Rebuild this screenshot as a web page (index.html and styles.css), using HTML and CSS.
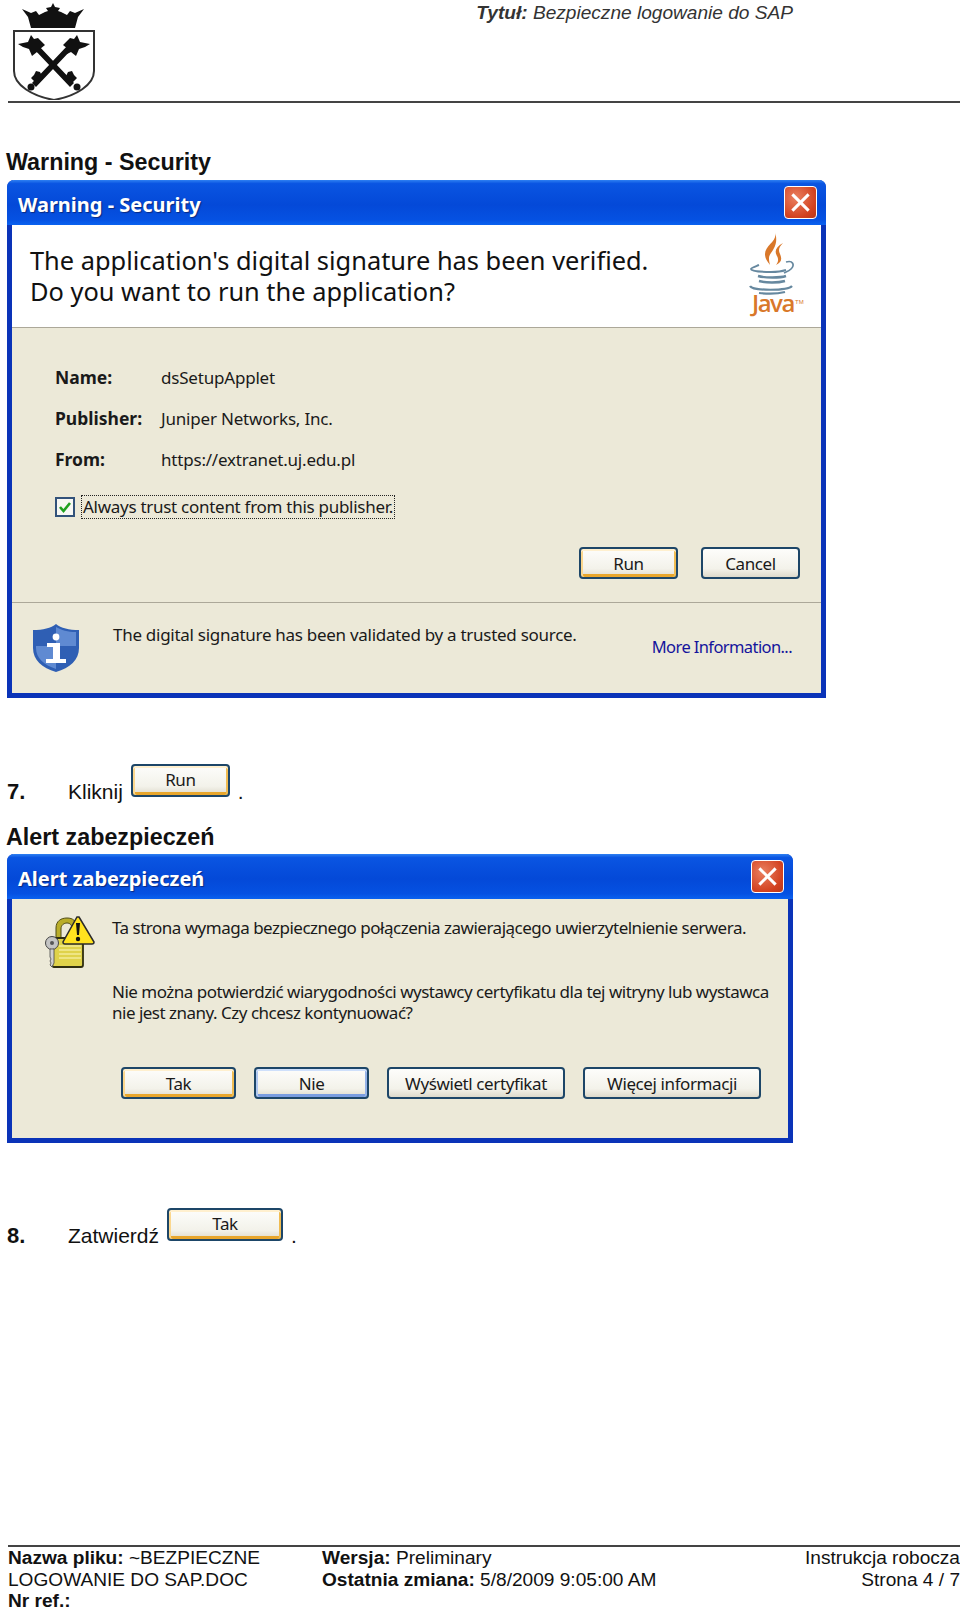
FILE: index.html
```html
<!DOCTYPE html>
<html lang="pl">
  <head>
    <meta charset="UTF-8" />
    <title>Bezpieczne logowanie do SAP</title>
    <link rel="stylesheet" href="styles.css">
  </head>
  <body>
    <!-- HEADER -->
    <header class="page-header">
      <svg class="crest" viewBox="12 0 86 100" width="86" height="100">
        <path d="M22 9l9 4 5-2 3 4 6-3 3-1-2-3 5-1 2-4 2 4 5 1-2 3 3 1 6 3 3-4 5 2 9-4-6 8-3 11H31l-3-11z" fill="#111"/>
        <path d="M14 31h80v40c0 14-18 25-40 29-22-4-40-15-40-29z" fill="#fff" stroke="#333" stroke-width="2"/>
        <path d="M36 47L72 85M70 47L34 85" stroke="#111" stroke-width="5.5" fill="none"/>
        <path d="M18 44l10-2 3-7 3 4 4-1 7 7-5 4 1 5-4-2-5 4-3-7-6-2z" fill="#111"/>
        <path d="M90 44l-10-2-3-7-3 4-4-1-7 7 5 4-1 5 4-2 5 4 3-7 6-2z" fill="#111"/>
        <path d="M40 72l-4-1-2 4-3 3 5 5 3-3 4-2zM68 72l4-1 2 4 3 3-5 5-3-3-4-2z" fill="#111"/>
        <circle cx="31" cy="87" r="3.5" fill="#111"/>
        <circle cx="77" cy="87" r="3.5" fill="#111"/>
      </svg>
      <p class="doc-title"><b>Tytuł:</b> Bezpieczne logowanie do SAP</p>
    </header>

    <main class="content">
      <h2 class="section-title first">Warning - Security</h2>

      <!-- JAVA DIALOG -->
      <div class="dialog java-dialog">
        <div class="titlebar">
          <span>Warning - Security</span>
          <span class="close-btn"></span>
        </div>
        <div class="banner">
          <p>The application's digital signature has been verified.<br />Do you want to run the application?</p>
          <svg class="java-logo" viewBox="0 0 58 92" width="58" height="92">
            <path d="M26 0c3 9-10 13-10 22 0 5 3 8 5 11-1-5-2-8 1-12 4-6 7-11 4-21z" fill="#d9782a"/>
            <path d="M34 11c-7 4-9 8-6 13 2 4 1 6-1 9 6-3 6-6 4-11-2-4-1-7 3-11z" fill="#d9782a"/>
            <path d="M10 33c-5 2-8 3-8 4 0 2 9 3 20 3 7 0 12-1 15-2" fill="none" stroke="#66889f" stroke-width="2"/>
            <path d="M37 30c7-2 9 3 5 7-2 2-5 3-7 4" fill="none" stroke="#66889f" stroke-width="1.7"/>
            <path d="M9 44c7 2 22 2 28 0M10 49c7 2 19 2 26 0" fill="none" stroke="#66889f" stroke-width="2.4"/>
            <path d="M1 54c2 5 38 5 42 0M10 61c9 1 18 1 26-1" fill="none" stroke="#66889f" stroke-width="2.2"/>
            <text class="java-word" x="3" y="80">Java</text>
            <text class="java-tm" x="46" y="72">TM</text>
          </svg>
        </div>
        <div class="java-body">
          <dl class="details">
            <dt>Name:</dt><dd>dsSetupApplet</dd>
            <dt>Publisher:</dt><dd>Juniper Networks, Inc.</dd>
            <dt>From:</dt><dd>https://extranet.uj.edu.pl</dd>
          </dl>
          <div class="trust-row">
            <span class="checkbox">
              <svg viewBox="0 0 14 14" width="14" height="14"><path d="M2 7l3.5 4L12 3" fill="none" stroke="#21a121" stroke-width="2.6"/></svg>
            </span>
            <span class="trust-label">Always trust content from this publisher.</span>
          </div>
          <div class="java-actions">
            <span class="xp-btn default">Run</span>
            <span class="xp-btn">Cancel</span>
          </div>
        </div>
        <div class="java-foot">
          <svg class="shield" viewBox="0 0 48 50" width="48" height="50">
            <path d="M24 1c5 4 13 6 23 6v18c0 12-9 20-23 24C10 45 1 37 1 25V7c10 0 18-2 23-6z" fill="#2f5fb4"/>
            <path d="M24 4c5 3 12 5 20 5v14H24zM24 23v23C12 42 4 35 4 25v-2z" fill="#5f8ad2"/>
            <circle cx="24" cy="14" r="3.4" fill="#fff"/>
            <path d="M15 20h13v16h6v4H14v-4h7V24h-6z" fill="#fff"/>
          </svg>
          <p class="foot-text">The digital signature has been validated by a trusted source.</p>
          <a class="more-link">More Information...</a>
        </div>
      </div>

      <p class="step step-seven">
        <b class="step-no">7.</b>
        <span>Kliknij</span>
        <span class="xp-btn default inline run-inline">Run</span>
        <span>.</span>
      </p>

      <h2 class="section-title second">Alert zabezpieczeń</h2>

      <!-- IE DIALOG -->
      <div class="dialog alert-dialog">
        <div class="titlebar">
          <span>Alert zabezpieczeń</span>
          <span class="close-btn"></span>
        </div>
        <div class="alert-body">
          <div class="alert-main">
            <svg class="lock" viewBox="0 0 50 52" width="50" height="52">
              <path d="M11 24V12c0-7 5-10 11-10s9 3 10 8l-5 3c0-4-2-6-5-6s-6 2-6 6v11z" fill="#b9ad2a" stroke="#4f4c16"/>
              <rect x="7" y="22" width="31" height="29" rx="2" fill="#dfd24a" stroke="#2f2e10" stroke-width="1.8"/>
              <path d="M14 30h22M14 34h22M14 38h22M14 42h22" stroke="#f3eb96" stroke-width="1.5"/>
              <path d="M34 1L49 26c0 1-1 2-2 2H20c-1 0-2-1-2-2L32 1z" fill="#ffe21f" stroke="#2b2b2b" stroke-width="1.5"/>
              <path d="M31 7h4l-1 12h-2z" fill="#111"/>
              <circle cx="33" cy="23" r="2.2" fill="#111"/>
              <circle cx="7" cy="27" r="6.5" fill="#c4c4c4" stroke="#444"/>
              <circle cx="7" cy="27" r="2" fill="#555"/>
              <path d="M5 33h4v14l-2 4-2-2 1-2-1-2 1-2-1-2z" fill="#d0d0d0" stroke="#444" stroke-width=".8"/>
            </svg>
            <div class="alert-text">
              <p>Ta strona wymaga bezpiecznego połączenia zawierającego uwierzytelnienie serwera.</p>
              <p>Nie można potwierdzić wiarygodności wystawcy certyfikatu dla tej witryny lub wystawca<br />nie jest znany. Czy chcesz kontynuować?</p>
            </div>
          </div>
          <div class="alert-actions">
            <span class="xp-btn default wide-s">Tak</span>
            <span class="xp-btn focus wide-s">Nie</span>
            <span class="xp-btn wide-l">Wyświetl certyfikat</span>
            <span class="xp-btn wide-l">Więcej informacji</span>
          </div>
        </div>
      </div>

      <p class="step step-eight">
        <b class="step-no">8.</b>
        <span>Zatwierdź</span>
        <span class="xp-btn default inline tak-inline">Tak</span>
        <span>.</span>
      </p>
    </main>

    <!-- FOOTER -->
    <footer class="page-footer">
      <div class="foot-file"><b>Nazwa pliku:</b> ~BEZPIECZNE<br />LOGOWANIE DO SAP.DOC<br /><b>Nr ref.:</b></div>
      <div class="foot-version"><b>Wersja:</b> Preliminary<br /><b>Ostatnia zmiana:</b> 5/8/2009 9:05:00 AM</div>
      <div class="foot-page">Instrukcja robocza<br />Strona 4 / 7</div>
    </footer>
  </body>
</html>
```

FILE: styles.css
```css
/* GLOBAL */
html,
body {
  margin: 0;
  padding: 0;
  height: 1610px;
  overflow: hidden;
}
*,
*::before,
*::after {
  box-sizing: border-box;
}
body {
  display: flex;
  flex-direction: column;
  font-family: "Liberation Sans", Arial, sans-serif;
  background: #fff;
  color: #111;
}
p,
h2,
dl,
dd {
  margin: 0;
}

/* HEADER */
.page-header {
  display: flex;
  justify-content: space-between;
  height: 103px;
  margin-left: 8px;
  padding-left: 4px;
  border-bottom: 2px solid #444;
}
.doc-title {
  font-size: 19.1px;
  font-style: italic;
  line-height: 25px;
  color: #333;
  padding-right: 167px;
}

/* HEADINGS & STEPS */
.content {
  flex: 1;
  padding-left: 7px;
}
.section-title {
  font-size: 23.3px;
  line-height: 27px;
  font-weight: bold;
  margin-left: -1px;
}
.section-title.first {
  margin-top: 46px;
  margin-bottom: 4px;
}
.section-title.second {
  margin-bottom: 3px;
}
.step {
  display: flex;
  align-items: flex-end;
  font-size: 21px;
  line-height: 24px;
}
.step-no {
  width: 61px;
  font-size: 22px;
}
.step > span:nth-child(2) {
  margin-right: 8px;
}
.step > span:last-child {
  margin-left: 8px;
}
.step-seven {
  margin-top: 66px;
  margin-bottom: 20px;
}
.step-eight {
  margin-top: 65px;
}

/* XP DIALOG */
.dialog {
  display: flex;
  flex-direction: column;
  border: 5px solid #0a33b8;
  border-top: 0;
  border-radius: 7px 7px 0 0;
  background: #ece9d8;
  font-family: "Noto Sans", "Open Sans", sans-serif;
  color: #1a1a1a;
}
.java-dialog {
  width: 819px;
  height: 518px;
}
.alert-dialog {
  width: 786px;
  height: 289px;
}
.titlebar {
  display: flex;
  align-items: center;
  justify-content: space-between;
  flex: none;
  height: 45px;
  margin: 0 -5px;
  padding: 0 9px 0 11px;
  border-radius: 7px 7px 0 0;
  background: linear-gradient(#2e80f2 0, #0a55e2 8%, #0449d8 55%, #0551e2 88%, #0a62f0 100%);
  color: #fff;
  font-size: 20px;
  font-weight: 700;
  text-shadow: 1px 1px 1px #0a2a80;
}
.titlebar > span:first-child {
  padding-top: 4px;
}
.close-btn {
  position: relative;
  width: 33px;
  height: 33px;
  border: 1px solid #fff;
  border-radius: 4px;
  background: radial-gradient(circle at 35% 35%, #ea8060, #d2411f 70%, #b8381a);
}
.close-btn::before,
.close-btn::after {
  content: "";
  position: absolute;
  top: 14px;
  left: 4px;
  width: 23px;
  height: 3px;
  background: #fff;
  transform: rotate(45deg);
}
.close-btn::after {
  transform: rotate(-45deg);
}

/* JAVA DIALOG */
.banner {
  display: flex;
  justify-content: space-between;
  flex: none;
  height: 103px;
  padding: 7px 14px 0 18px;
  background: #fff;
  border-bottom: 1px solid #aca899;
  font-size: 25.4px;
  line-height: 31px;
}
.banner p {
  padding-top: 13px;
  color: #111;
}
.java-word {
  font-family: "Open Sans", sans-serif;
  font-size: 24px;
  font-weight: 600;
  fill: #d9782a;
  letter-spacing: -1.5px;
}
.java-tm {
  font-family: "Liberation Sans", sans-serif;
  font-size: 6px;
  fill: #d9782a;
}
.java-body {
  flex: none;
  height: 275px;
  padding: 37px 21px 0 43px;
  border-bottom: 1px solid #aca899;
  font-size: 17px;
  letter-spacing: -.28px;
}
.details {
  display: grid;
  grid-template-columns: 106px 1fr;
  row-gap: 16px;
  line-height: 25px;
}
.details dt {
  font-weight: 700;
  font-size: 17.5px;
  letter-spacing: 0;
}
.details dd {
  letter-spacing: -.2px;
}
.trust-row {
  display: flex;
  align-items: center;
  gap: 6px;
  margin-top: 23px;
}
.checkbox {
  display: flex;
  align-items: center;
  justify-content: center;
  width: 20px;
  height: 20px;
  border: 2px solid #32527a;
  background: #f8f8f4;
}
.trust-label {
  padding: 0 1px;
  border: 1px dotted #222;
  line-height: 22px;
}
.java-actions {
  display: flex;
  justify-content: flex-end;
  gap: 23px;
  margin-top: 28px;
  letter-spacing: 0;
}
.java-actions .xp-btn {
  width: 99px;
}
.java-foot {
  position: relative;
  display: flex;
  align-items: flex-start;
  flex: 1;
  padding: 20px 0 0 20px;
  font-size: 17px;
  letter-spacing: -.28px;
}
.foot-text {
  margin-left: 33px;
  line-height: 24px;
}
.more-link {
  position: absolute;
  top: 32px;
  right: 29px;
  line-height: 24px;
  color: #14149c;
  font-size: 16.5px;
  letter-spacing: -.6px;
}

/* XP BUTTONS */
.xp-btn {
  display: inline-flex;
  align-items: center;
  justify-content: center;
  height: 32px;
  border: 2px solid #1d4668;
  border-radius: 4px;
  background: linear-gradient(#fdfdfb, #f3f2ea 70%, #dedacb);
  font-family: "Noto Sans", "Open Sans", sans-serif;
  font-size: 17px;
  letter-spacing: -.4px;
  color: #1a1a1a;
}
.xp-btn.default {
  box-shadow: inset 0 2px 0 #fff0cf, inset 2px 0 0 #fbd78e, inset -2px 0 0 #f0bc52, inset 0 -3px 0 #e8a62c;
}
.xp-btn.focus {
  box-shadow: inset 0 2px 0 #cfe0fb, inset 2px 0 0 #b0c8f0, inset -2px 0 0 #95b3e8, inset 0 -3px 0 #7a9de0;
}
.xp-btn.inline {
  height: 33px;
  align-items: flex-start;
  line-height: 27px;
  margin-bottom: 7px;
}
.run-inline {
  width: 99px;
}
.tak-inline {
  width: 116px;
  margin-bottom: 8px;
}

/* ALERT DIALOG */
.alert-body {
  display: flex;
  flex-direction: column;
  flex: 1;
}
.alert-main {
  display: flex;
  height: 168px;
  padding: 17px 0 0 33px;
}
.alert-text {
  margin-left: 17px;
  font-size: 17px;
  letter-spacing: -.5px;
  line-height: 21.5px;
  white-space: nowrap;
}
.alert-text p {
  margin-top: 1px;
  margin-bottom: 42px;
}
.alert-actions {
  display: flex;
  gap: 18px;
  padding-left: 109px;
}
.wide-s {
  width: 115px;
}
.wide-l {
  width: 178px;
}

/* FOOTER */
.page-footer {
  display: grid;
  grid-template-columns: 314px 1fr auto;
  flex: none;
  height: 65px;
  margin-left: 8px;
  border-top: 2px solid #444;
  font-size: 19.1px;
  line-height: 21.5px;
  color: #111;
}
.foot-page {
  text-align: right;
}
```
